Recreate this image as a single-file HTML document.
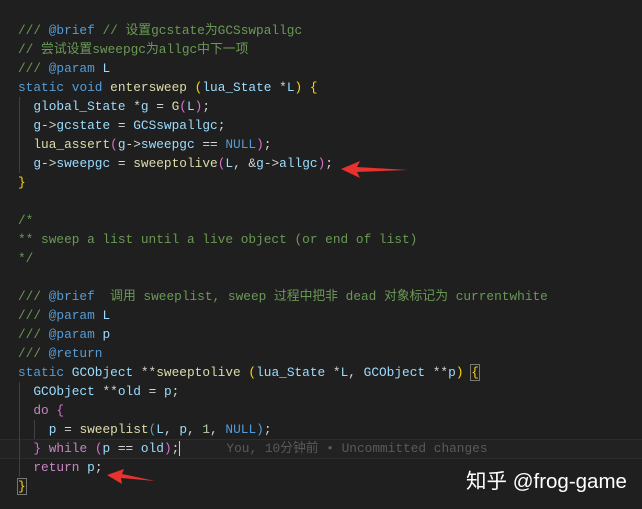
<!DOCTYPE html>
<html><head><meta charset="utf-8"><style>
body{margin:0;width:642px;height:509px;background:#1f1f1f;overflow:hidden;position:relative;font-family:"Liberation Mono","Noto Sans CJK SC",monospace;font-size:12.8px;}
.l{position:absolute;left:18px;height:19px;line-height:19px;white-space:pre;color:#d4d4d4;}
.c{color:#6a9955}.k{color:#569cd6}.f{color:#dcdcaa}.v{color:#9cdcfe}.p{color:#c586c0}.y{color:#ffd700}.m{color:#da70d6}.n{color:#b5cea8}.g{color:#5a5a5a}
.ig{position:absolute;width:1px;background:#404040}
</style></head><body>
<div style="position:absolute;left:0;top:439px;width:642px;height:18px;border-top:1px solid #2c2c2c;border-bottom:1px solid #2c2c2c;background:#222"></div>
<div class="ig" style="left:19px;top:97px;height:76px"></div>
<div class="ig" style="left:19px;top:382px;height:95px"></div>
<div class="ig" style="left:34px;top:420px;height:19px"></div>
<div class="l" style="top:21px"><span class="c">/// <span class="k">@brief</span> // 设置gcstate为GCSswpallgc</span></div>
<div class="l" style="top:40px"><span class="c">// 尝试设置sweepgc为allgc中下一项</span></div>
<div class="l" style="top:59px"><span class="c">/// <span class="k">@param</span> <span class="v">L</span></span></div>
<div class="l" style="top:78px"><span class="k">static</span> <span class="k">void</span> <span class="f">entersweep</span> <span class="y">(</span><span class="v">lua_State</span> *<span class="v">L</span><span class="y">)</span> <span class="y">{</span></div>
<div class="l" style="top:97px">  <span class="v">global_State</span> *<span class="v">g</span> = <span class="f">G</span><span class="m">(</span><span class="v">L</span><span class="m">)</span>;</div>
<div class="l" style="top:116px">  <span class="v">g</span>-&gt;<span class="v">gcstate</span> = <span class="v">GCSswpallgc</span>;</div>
<div class="l" style="top:135px">  <span class="f">lua_assert</span><span class="m">(</span><span class="v">g</span>-&gt;<span class="v">sweepgc</span> == <span class="k">NULL</span><span class="m">)</span>;</div>
<div class="l" style="top:154px">  <span class="v">g</span>-&gt;<span class="v">sweepgc</span> = <span class="f">sweeptolive</span><span class="m">(</span><span class="v">L</span>, &amp;<span class="v">g</span>-&gt;<span class="v">allgc</span><span class="m">)</span>;</div>
<div class="l" style="top:173px"><span class="y">}</span></div>
<div class="l" style="top:211px"><span class="c">/*</span></div>
<div class="l" style="top:230px"><span class="c">** sweep a list until a live object (or end of list)</span></div>
<div class="l" style="top:249px"><span class="c">*/</span></div>
<div class="l" style="top:287px"><span class="c">/// <span class="k">@brief</span>  调用 sweeplist, sweep 过程中把非 dead 对象标记为 currentwhite</span></div>
<div class="l" style="top:306px"><span class="c">/// <span class="k">@param</span> <span class="v">L</span></span></div>
<div class="l" style="top:325px"><span class="c">/// <span class="k">@param</span> <span class="v">p</span></span></div>
<div class="l" style="top:344px"><span class="c">/// <span class="k">@return</span></span></div>
<div class="l" style="top:363px"><span class="k">static</span> <span class="v">GCObject</span> **<span class="f">sweeptolive</span> <span class="y">(</span><span class="v">lua_State</span> *<span class="v">L</span>, <span class="v">GCObject</span> **<span class="v">p</span><span class="y">)</span> <span class="y" style="outline:1px solid #777">{</span></div>
<div class="l" style="top:382px">  <span class="v">GCObject</span> **<span class="v">old</span> = <span class="v">p</span>;</div>
<div class="l" style="top:401px">  <span class="p">do</span> <span class="m">{</span></div>
<div class="l" style="top:420px">    <span class="v">p</span> = <span class="f">sweeplist</span><span class="k">(</span><span class="v">L</span>, <span class="v">p</span>, <span class="n">1</span>, <span class="k">NULL</span><span class="k">)</span>;</div>
<div class="l" style="top:439px">  <span class="m">}</span> <span class="p">while</span> <span class="m">(</span><span class="v">p</span> == <span class="v">old</span><span class="m">)</span>;<span style="border-left:1px solid #ccc"></span>      <span class="g">You, 10分钟前 • Uncommitted changes</span></div>
<div class="l" style="top:458px">  <span class="p">return</span> <span class="v">p</span>;</div>
<div class="l" style="top:477px"><span class="y" style="outline:1px solid #777">}</span></div>
<svg style="position:absolute;left:0;top:0" width="642" height="509">
<polygon points="341,169 360,161 357,167 408,170 357,172 360,178" fill="#e8322d"/>
<polygon points="107,475 124,469 122,474 155,481 121,478 122,484" fill="#e8322d"/>
</svg>
<div style="position:absolute;left:466px;top:464px;font-family:'Liberation Sans','Noto Sans CJK SC',sans-serif;font-size:20.5px;color:#fff">知乎 @frog-game</div>
</body></html>
